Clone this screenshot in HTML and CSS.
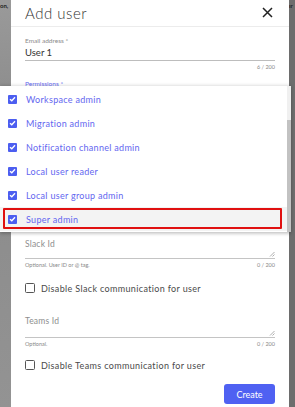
FILE: index.html
```html
<!DOCTYPE html>
<html>
<head>
<meta charset="utf-8">
<link rel="stylesheet" href="styles.css">
</head>
<body>
<div class="backdrop">
  <div class="bg-left"><span class="bg-text">on,</span></div>
  <div class="dialog">
    <div class="header">
      <h1 class="title">Add user</h1>
      <svg class="close" width="11" height="11" viewBox="0 0 11 11"><path d="M1 1L10 10M10 1L1 10" stroke="#222" stroke-width="1.5" fill="none"/></svg>
    </div>
    <div class="body">
      <div class="field email">
        <div class="label-small">Email address *</div>
        <div class="value">User 1</div>
        <div class="helper"><span></span><span>6 / 200</span></div>
      </div>
      <div class="field perms">
        <div class="label-small blue">Permissions *</div>
      </div>
      <div class="field slack">
        <div class="label-big">Slack Id</div>
        <div class="textarea-line"><svg class="resize" width="6" height="6" viewBox="0 0 6 6"><path d="M1 5.5L5.5 1M3.5 5.5L5.5 3.5" stroke="#999" stroke-width="0.8"/></svg></div>
        <div class="helper"><span>Optional. User ID or @ tag.</span><span>0 / 200</span></div>
      </div>
      <label class="check-row slack-check"><span class="box"></span><span>Disable Slack communication for user</span></label>
      <div class="field teams">
        <div class="label-big">Teams Id</div>
        <div class="textarea-line"><svg class="resize" width="6" height="6" viewBox="0 0 6 6"><path d="M1 5.5L5.5 1M3.5 5.5L5.5 3.5" stroke="#999" stroke-width="0.8"/></svg></div>
        <div class="helper"><span>Optional.</span><span>0 / 200</span></div>
      </div>
      <label class="check-row teams-check"><span class="box"></span><span>Disable Teams communication for user</span></label>
      <div class="actions"><button class="create">Create</button></div>
    </div>
  </div>
  <div class="bg-right"><span class="bg-text">ır</span></div>

  <div class="menu">
    <ul class="options">
      <li class="opt"><span class="cb"><svg width="7" height="6" viewBox="0 0 7 6"><path d="M1 3.2L2.8 4.8L6 1.2" stroke="#fff" stroke-width="1.3" fill="none"/></svg></span>Workspace admin</li>
      <li class="opt"><span class="cb"><svg width="7" height="6" viewBox="0 0 7 6"><path d="M1 3.2L2.8 4.8L6 1.2" stroke="#fff" stroke-width="1.3" fill="none"/></svg></span>Migration admin</li>
      <li class="opt"><span class="cb"><svg width="7" height="6" viewBox="0 0 7 6"><path d="M1 3.2L2.8 4.8L6 1.2" stroke="#fff" stroke-width="1.3" fill="none"/></svg></span>Notification channel admin</li>
      <li class="opt"><span class="cb"><svg width="7" height="6" viewBox="0 0 7 6"><path d="M1 3.2L2.8 4.8L6 1.2" stroke="#fff" stroke-width="1.3" fill="none"/></svg></span>Local user reader</li>
      <li class="opt"><span class="cb"><svg width="7" height="6" viewBox="0 0 7 6"><path d="M1 3.2L2.8 4.8L6 1.2" stroke="#fff" stroke-width="1.3" fill="none"/></svg></span>Local user group admin</li>
      <li class="opt active"><span class="cb"><svg width="7" height="6" viewBox="0 0 7 6"><path d="M1 3.2L2.8 4.8L6 1.2" stroke="#fff" stroke-width="1.3" fill="none"/></svg></span>Super admin</li>
    </ul>
    <div class="scrollbar"><div class="thumb"></div></div>
  </div>
</div>
</body>
</html>
```

FILE: styles.css
```css
* { box-sizing: border-box; }
html, body { margin: 0; padding: 0; }
body {
  width: 295px;
  height: 407px;
  overflow: hidden;
  font-family: "Lato", "Open Sans", sans-serif;
  background: #7b7b7b;
}
.backdrop {
  position: relative;
  display: flex;
  height: 407px;
}
.bg-left {
  width: 11px;
  flex: none;
  background: linear-gradient(#9a9a9a, #8a8a8a 30%, #939393);
  overflow: hidden;
}
.bg-right {
  flex: 1;
  background: #6d6d6d;
  overflow: hidden;
}
.bg-text {
  display: block;
  font-size: 6px;
  color: #222;
  margin-top: 2px;
  white-space: nowrap;
  font-weight: 700;
}
.dialog {
  width: 278px;
  flex: none;
  background: #fff;
  height: 407px;
  display: flex;
  flex-direction: column;
  overflow: hidden;
}
.header {
  flex: none;
  height: 27px;
  border-bottom: 1px solid #ececec;
  display: flex;
  align-items: center;
  justify-content: space-between;
  padding: 0 16px 0 14px;
}
.title {
  margin: 0;
  font-size: 15px;
  font-weight: 300;
  color: #333;
  letter-spacing: 0.5px;
}
.close { display: block; margin-top: -1px; }
.body {
  flex: none;
  padding: 0 14px;
  display: flex;
  flex-direction: column;
}
.field, .check-row, .actions { flex: none; }
.label-small {
  font-size: 6.5px;
  color: #8a8a8a;
  line-height: 8px;
}
.label-small.blue { color: #6668f0; }
.email { padding-top: 10px; }
.value {
  font-size: 9.5px;
  color: #333;
  line-height: 12px;
  padding: 2px 0 0;
  border-bottom: 1px solid #bdbdbd;
  height: 16px;
}
.helper {
  display: flex;
  justify-content: space-between;
  font-size: 5.5px;
  color: #888;
  line-height: 8px;
  padding-top: 2px;
  height: 10px;
}
.perms {
  padding-top: 9px;
  height: 168px;
}
.label-big {
  font-size: 8.5px;
  color: #8e8e8e;
  line-height: 10px;
  letter-spacing: 0.2px;
}
.textarea-line {
  height: 10px;
  border-bottom: 1px solid #c4c4c4;
  display: flex;
  justify-content: flex-end;
  align-items: flex-end;
  padding-bottom: 1px;
}
.resize { display: block; }
.check-row {
  display: flex;
  align-items: center;
  gap: 6px;
  font-size: 9px;
  color: #4a4a4a;
  letter-spacing: 0.35px;
  height: 14px;
}
.slack-check { margin-top: 12px; }
.teams { margin-top: 21px; }
.teams .textarea-line { height: 12px; }
.teams-check { margin-top: 10px; }
.box {
  width: 10px;
  height: 10px;
  border: 1.3px solid #555;
  border-radius: 1.5px;
  flex: none;
}
.actions {
  display: flex;
  justify-content: flex-end;
  margin-top: 12px;
}
.create {
  width: 51px;
  height: 20px;
  border: none;
  border-radius: 3px;
  background: #4f61f2;
  color: #fff;
  font-family: "Lato", sans-serif;
  font-size: 9px;
  padding: 0;
}
.menu {
  position: absolute;
  left: 0;
  top: 86px;
  width: 291px;
  height: 146px;
  background: #fff;
  box-shadow: 0 -1px 3px rgba(0,0,0,0.12), 0 2px 3px rgba(0,0,0,0.2);
  display: flex;
}
.options {
  list-style: none;
  margin: 0;
  padding: 1px 0 0;
  flex: 1;
}
.opt {
  height: 24px;
  display: flex;
  align-items: center;
  padding-left: 8px;
  font-size: 9px;
  color: #6366f0;
  letter-spacing: 0.3px;
}
.opt.active {
  background: #f3f3f3;
  position: relative;
}
.opt.active::after {
  content: "";
  position: absolute;
  top: 1px;
  bottom: 2px;
  left: 3px;
  right: 5px;
  border: 2px solid #e01010;
  border-radius: 1px;
}
.cb {
  width: 9px;
  height: 9px;
  background: #4c5ef0;
  border-radius: 1px;
  display: flex;
  align-items: center;
  justify-content: center;
  margin-right: 9px;
}
.cb svg { display: block; }
.scrollbar {
  width: 4px;
  background: #f0f0f0;
  display: flex;
  flex-direction: column;
  justify-content: flex-end;
}
.thumb {
  height: 112px;
  background: #c2c2c2;
}
```
